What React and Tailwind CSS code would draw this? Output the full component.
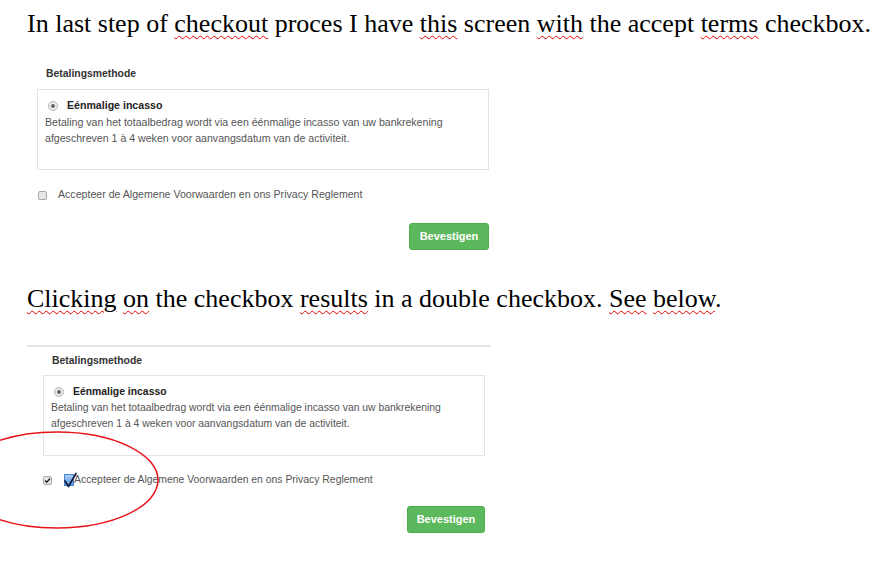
import React from "react";

const serif = { fontFamily: '"Liberation Serif", "Times New Roman", serif' };
const sans = { fontFamily: '"Liberation Sans", Arial, sans-serif' };

function Squig({ children }) {
  return (
    <span className="underline decoration-wavy decoration-[#e00] decoration-[1px] underline-offset-[3px]">
      {children}
    </span>
  );
}

function Radio() {
  return (
    <span className="inline-flex w-[10px] h-[10px] rounded-full border border-[#b5b5b5] bg-[#ececec] items-center justify-center shrink-0">
      <span className="w-[4px] h-[4px] rounded-full bg-[#666]" />
    </span>
  );
}

function Checkbox({ checked }) {
  return (
    <span className="inline-flex w-[9px] h-[9px] rounded-[2px] border border-[#a9a9a9] bg-[#e6e6e6] items-center justify-center shrink-0">
      {checked && (
        <svg width="7" height="7" viewBox="0 0 7 7">
          <path d="M1 3.6 L2.7 5.3 L6 1.5" stroke="#222" strokeWidth="1.4" fill="none" />
        </svg>
      )}
    </span>
  );
}

function BlueCheck() {
  return (
    <span className="relative inline-block w-[10px] h-[12px] bg-gradient-to-b from-[#a9cdf3] to-[#5b9de2] border border-[#4a86cf] shrink-0">
      <svg className="absolute left-[-1px] top-[-3px] overflow-visible" width="13" height="16" viewBox="0 0 13 16">
        <path d="M1 9 L4.5 14.5 L12 1.5" stroke="#101c44" strokeWidth="1.7" fill="none" strokeLinecap="round" strokeLinejoin="round" />
      </svg>
    </span>
  );
}

function Shot({ variant }) {
  const second = variant === 2;
  return (
    <div style={sans} className={`${second ? "text-[10.4px]" : "text-[10.6px]"} text-[#333]`}>
      <div className="font-bold text-[10.4px] leading-[16px] pl-[9px]">Betalingsmethode</div>
      <div
        className={`border border-[#e3e3e3] pt-[8px] pb-[23px] pl-[7px] ${second ? "mt-[6px] w-[442px]" : "mt-[7px] w-[452px]"}`}
      >
        <div className="flex items-center h-[16px] pl-[3px]">
          <Radio />
          <span className="font-bold ml-[9px] text-[#222]">Eénmalige incasso</span>
        </div>
        <div className="leading-[16px] text-[#555]">
          Betaling van het totaalbedrag wordt via een éénmalige incasso van uw bankrekening
          <br />
          afgeschreven 1 à 4 weken voor aanvangsdatum van de activiteit.
        </div>
      </div>
      {second ? (
        <div className="flex items-center h-[16px] mt-[16px] text-[#555]">
          <Checkbox checked />
          <span className="ml-[12px] flex">
            <BlueCheck />
          </span>
          <span>Accepteer de Algemene Voorwaarden en ons Privacy Reglement</span>
        </div>
      ) : (
        <div className="flex items-center h-[16px] mt-[17px] text-[#555]">
          <span className="ml-[1px] flex">
            <Checkbox />
          </span>
          <span className="ml-[11px]">Accepteer de Algemene Voorwaarden en ons Privacy Reglement</span>
        </div>
      )}
      <div className={`flex justify-end ${second ? "mt-[18px] w-[442px]" : "mt-[20px] w-[452px]"}`}>
        <button
          className={`h-[27px] rounded-[3px] bg-[#5cb85c] border border-[#4cae4c] text-white font-bold text-[11px] ${second ? "w-[78px]" : "w-[80px]"}`}
        >
          Bevestigen
        </button>
      </div>
    </div>
  );
}

export default function App() {
  return (
    <div className="relative w-[880px] h-[569px] bg-white overflow-hidden">
      <div style={serif} className="pl-[27px] pt-[10px] text-[26px] leading-[28px] text-black whitespace-nowrap">
        In last step of <Squig>checkout</Squig> proces I have <Squig>this</Squig> screen{" "}
        <Squig>with</Squig> the accept <Squig>terms</Squig> checkbox.
      </div>

      <div className="ml-[37px] mt-[28px]">
        <Shot variant={1} />
      </div>

      <div style={serif} className="pl-[27px] mt-[35px] text-[26px] leading-[28px] text-black whitespace-nowrap">
        <Squig>Clicking</Squig> <Squig>on</Squig> the checkbox <Squig>results</Squig> in a double checkbox.{" "}
        <Squig>See</Squig> <Squig>below</Squig>.
      </div>

      <div className="ml-[27px] mt-[32px] w-[464px] h-[2px] bg-[#e6e6e6]" />

      <div className="ml-[43px] mt-[6px]">
        <Shot variant={2} />
      </div>

      <svg className="absolute left-0 top-0 pointer-events-none" width="880" height="569">
        <ellipse cx="57" cy="480" rx="101" ry="48" fill="none" stroke="#e8131b" strokeWidth="1.5" />
      </svg>
    </div>
  );
}
